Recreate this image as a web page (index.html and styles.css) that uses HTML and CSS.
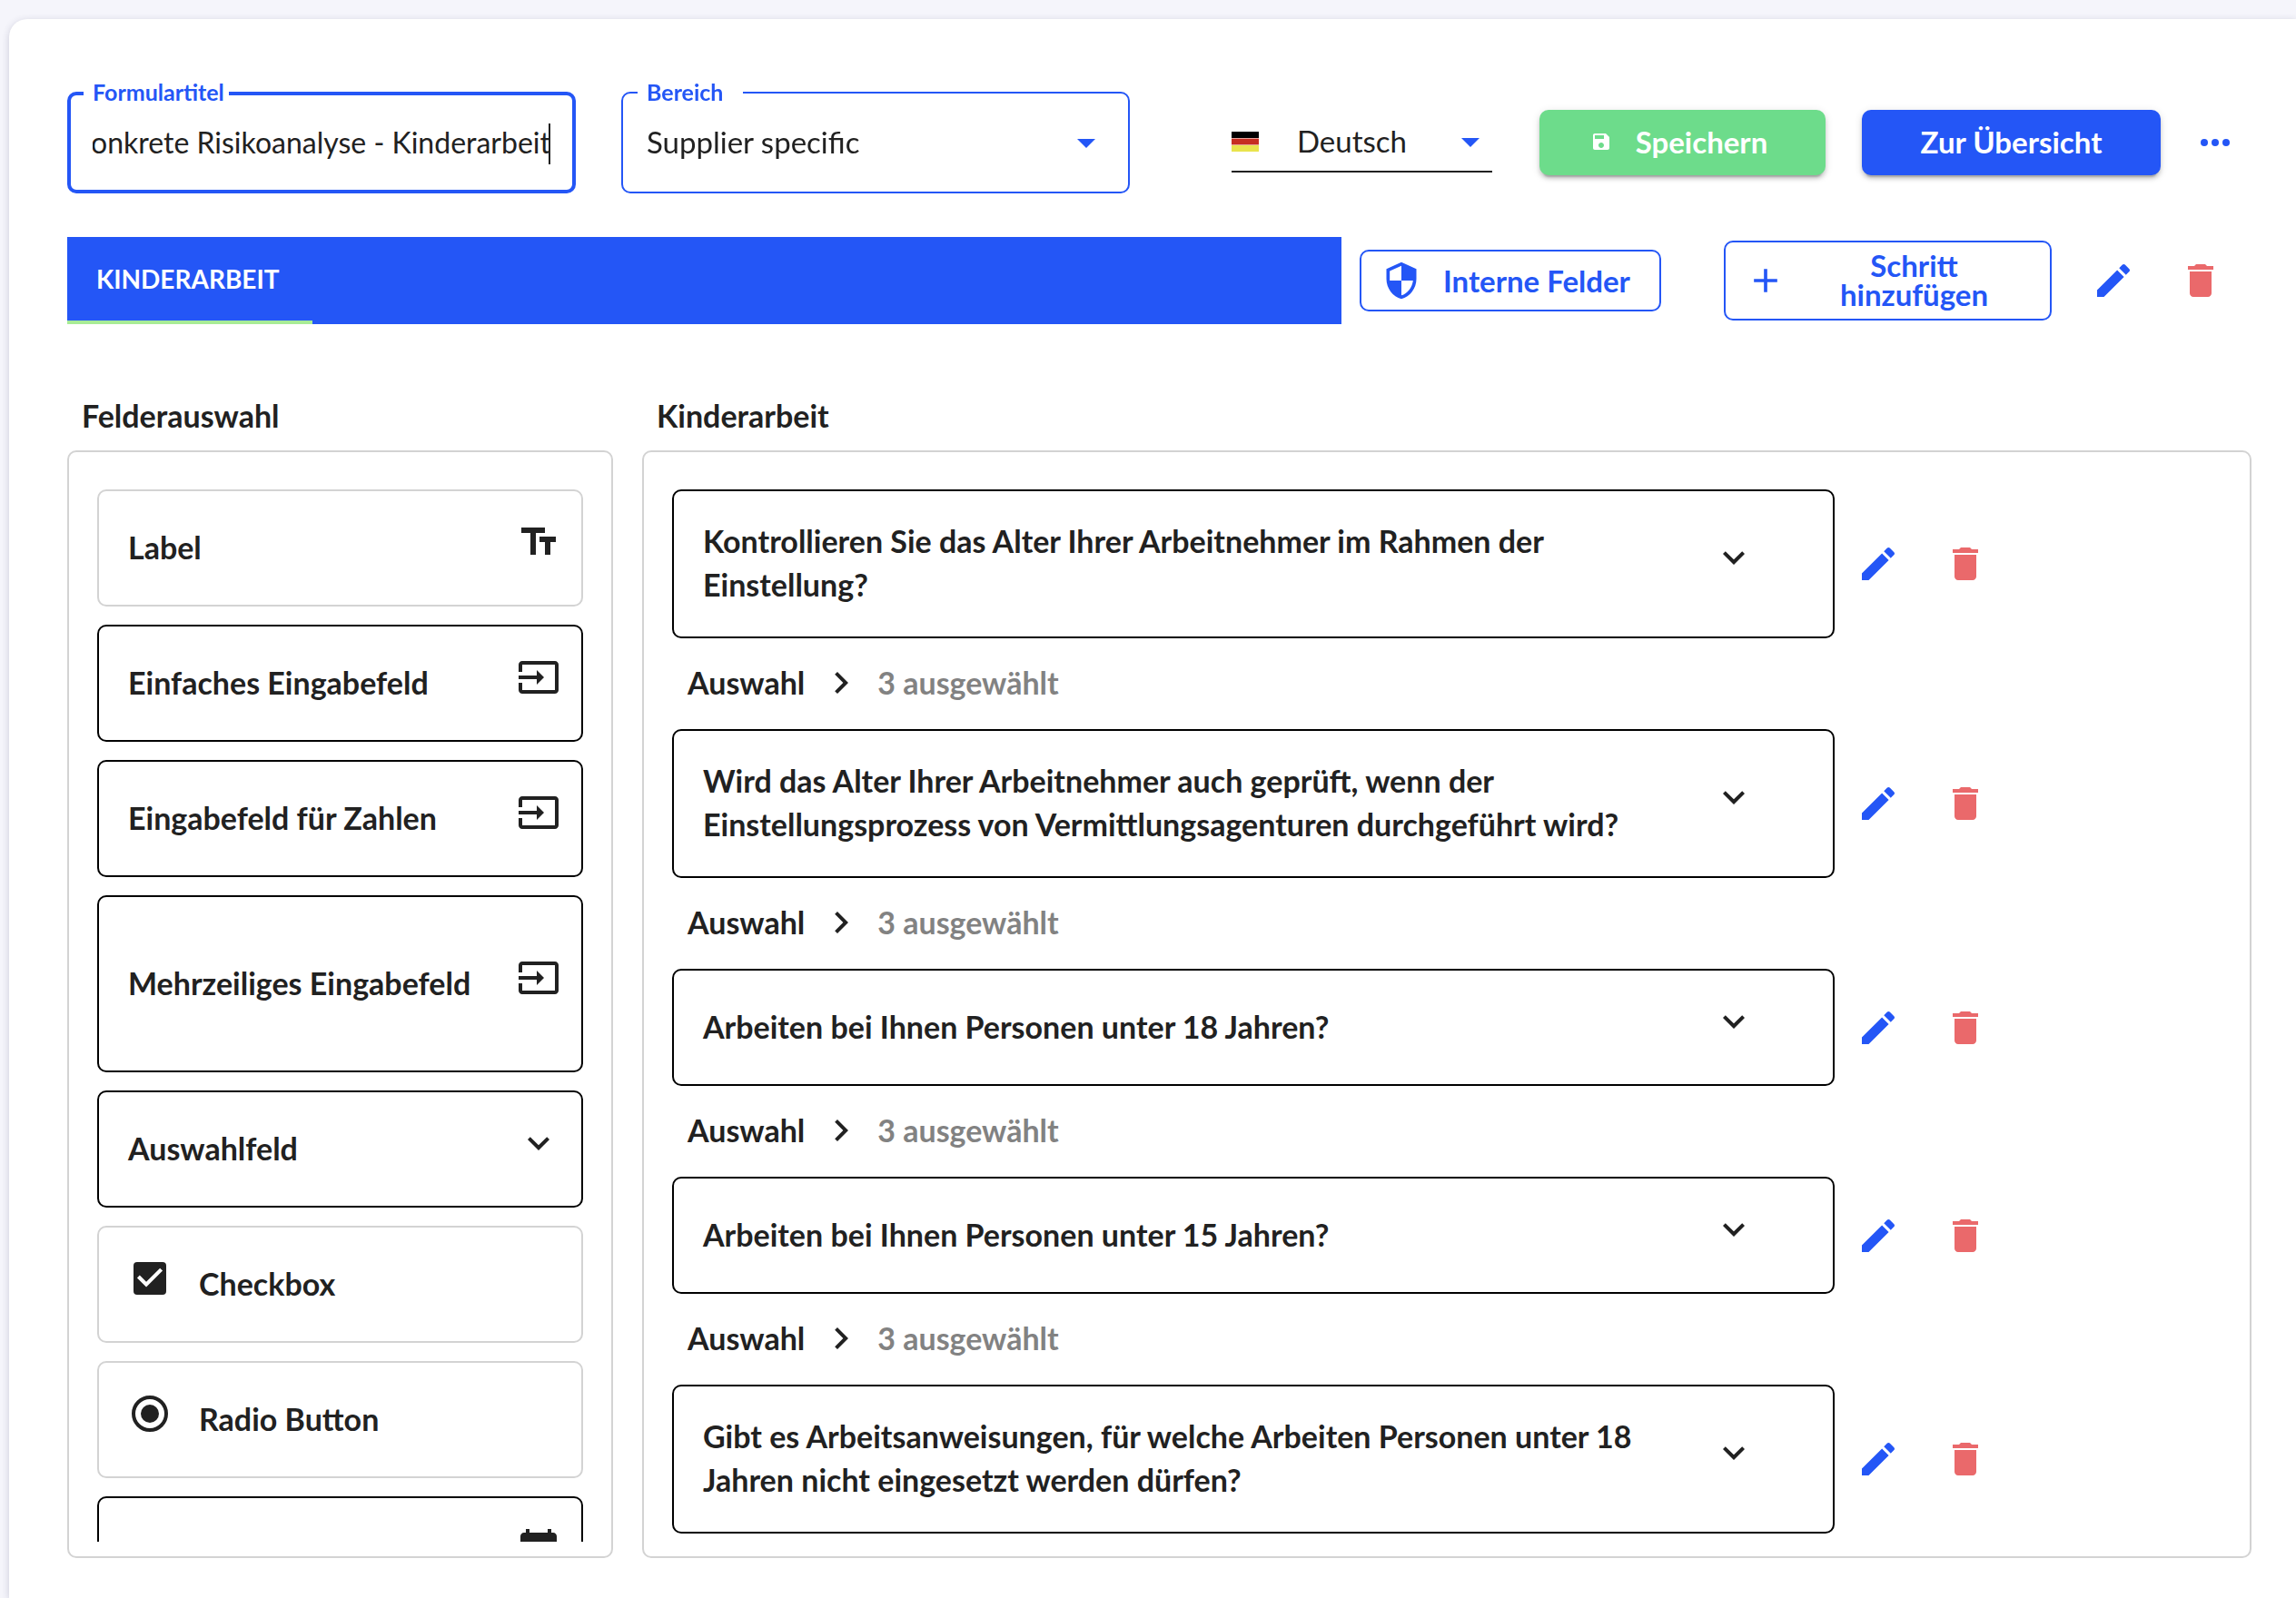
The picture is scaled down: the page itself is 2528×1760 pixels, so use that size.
FILE: index.html
```html
<!DOCTYPE html>
<html lang="de">
<head>
<meta charset="utf-8">
<meta name="viewport" content="width=device-width, initial-scale=1">
<title>Konkrete Risikoanalyse - Kinderarbeit</title>
<link rel="stylesheet" href="styles.css">
</head>
<body>
<svg class="sprite" aria-hidden="true">
  <symbol id="edit" viewBox="0 0 24 24"><path d="M3 17.25V21h3.75L17.81 9.94l-3.75-3.75L3 17.25zM20.71 7.04c.39-.39.39-1.02 0-1.41l-2.34-2.34c-.39-.39-1.02-.39-1.41 0l-1.83 1.83 3.75 3.75 1.83-1.83z"/></symbol>
  <symbol id="trash" viewBox="0 0 24 24"><path d="M6 19c0 1.1.9 2 2 2h8c1.1 0 2-.9 2-2V7H6v12zM19 4h-3.5l-1-1h-5l-1 1H5v2h14V4z"/></symbol>
  <symbol id="input" viewBox="0 0 24 24"><path d="M21 3.01H3c-1.1 0-2 .9-2 2V9h2V4.99h18v14.03H3V15H1v4.01c0 1.1.9 1.98 2 1.98h18c1.1 0 2-.88 2-1.98v-14c0-1.11-.9-2-2-2zM11 16l4-4-4-4v3H1v2h10v3z"/></symbol>
  <symbol id="text" viewBox="0 0 24 24"><path d="M2.5 4v3h5v12h3V7h5V4h-13zm19 5h-9v3h3v7h3v-7h3V9z"/></symbol>
  <symbol id="down" viewBox="0 0 24 24"><path d="M16.59 8.59L12 13.17 7.41 8.59 6 10l6 6 6-6z"/></symbol>
  <symbol id="right" viewBox="0 0 24 24"><path d="M10 6L8.59 7.41 13.17 12l-4.58 4.59L10 18l6-6z"/></symbol>
  <symbol id="calendar" viewBox="0 0 24 24"><path d="M20 3h-1V1h-2v2H7V1H5v2H4c-1.1 0-2 .9-2 2v16c0 1.1.9 2 2 2h16c1.1 0 2-.9 2-2V5c0-1.1-.9-2-2-2zm0 18H4V8h16v13z"/></symbol>
  <symbol id="save" viewBox="0 0 24 24"><path d="M17 3H5c-1.11 0-2 .9-2 2v14c0 1.1.89 2 2 2h14c1.1 0 2-.9 2-2V7l-4-4zm-5 16c-1.66 0-3-1.34-3-3s1.34-3 3-3 3 1.34 3 3-1.34 3-3 3zm3-10H5V5h10v4z"/></symbol>
  <symbol id="shield" viewBox="0 0 24 24"><path d="M12 1L3 5v6c0 5.55 3.84 10.74 9 12 5.16-1.26 9-6.45 9-12V5l-9-4zm0 10.99h7c-.53 4.12-3.28 7.79-7 8.94V12H5V6.3l7-3.11v8.8z"/></symbol>
  <symbol id="plus" viewBox="0 0 24 24"><path d="M19 13h-6v6h-2v-6H5v-2h6V5h2v6h6v2z"/></symbol>
  <symbol id="more" viewBox="0 0 24 24"><circle cx="6" cy="12" r="2"/><circle cx="12" cy="12" r="2"/><circle cx="18" cy="12" r="2"/></symbol>
  <symbol id="caret" viewBox="0 0 20 10"><path d="M0 0h20L10 10z"/></symbol>
  <symbol id="flag" viewBox="0 0 30 22"><path fill="#000" d="M0 0h30v7H0z"/><path fill="#e8a49c" d="M0 7h30v8H0z"/><path fill="#c62e22" d="M0 8h30v6H0z"/><path fill="#e9e44d" d="M0 15h30v7H0z"/></symbol>
</svg>

<main class="card">
  <header class="toolbar">
    <div class="field field-focused">
      <label class="field-label" for="form-title">Formulartitel</label>
      <input class="field-control" id="form-title" type="text" value="Konkrete Risikoanalyse - Kinderarbeit">
      <span class="text-cursor"></span>
    </div>
    <div class="field">
      <label class="field-label field-label-wide" for="area">Bereich</label>
      <select class="field-control" id="area"><option>Supplier specific</option></select>
      <svg class="caret"><use href="#caret"/></svg>
    </div>
    <div class="language">
      <svg class="flag"><use href="#flag"/></svg>
      <select class="language-select" aria-label="Sprache"><option>Deutsch</option></select>
      <svg class="caret"><use href="#caret"/></svg>
    </div>
    <button class="btn btn-save" type="button"><svg class="icon-small"><use href="#save"/></svg>Speichern</button>
    <button class="btn btn-overview" type="button">Zur Übersicht</button>
    <button class="icon-btn" type="button" aria-label="Mehr"><svg class="icon"><use href="#more"/></svg></button>
  </header>

  <div class="steps">
    <div class="tabs" role="tablist"><button class="tab" type="button" role="tab" aria-selected="true">KINDERARBEIT</button></div>
    <button class="btn-outline btn-internal" type="button"><svg class="icon-medium"><use href="#shield"/></svg><span>Interne Felder</span></button>
    <button class="btn-outline btn-step" type="button"><svg class="icon-medium"><use href="#plus"/></svg><span class="btn-text">Schritt hinzufügen</span></button>
    <div class="actions">
      <button class="icon-btn" type="button" aria-label="Schritt bearbeiten"><svg class="icon"><use href="#edit"/></svg></button>
      <button class="icon-btn danger" type="button" aria-label="Schritt löschen"><svg class="icon"><use href="#trash"/></svg></button>
    </div>
  </div>

  <div class="columns">
    <section class="column palette">
      <h2 class="column-title">Felderauswahl</h2>
      <div class="panel">
        <ul class="list palette-list">
          <li class="tile tile-light"><span>Label</span><svg class="icon"><use href="#text"/></svg></li>
          <li class="tile"><span>Einfaches Eingabefeld</span><svg class="icon"><use href="#input"/></svg></li>
          <li class="tile"><span>Eingabefeld für Zahlen</span><svg class="icon"><use href="#input"/></svg></li>
          <li class="tile tile-tall"><span>Mehrzeiliges Eingabefeld</span><svg class="icon"><use href="#input"/></svg></li>
          <li class="tile"><span>Auswahlfeld</span><svg class="icon"><use href="#down"/></svg></li>
          <li class="tile tile-light"><label class="choice"><input class="check" type="checkbox" checked>Checkbox</label></li>
          <li class="tile tile-light"><label class="choice"><input class="radio" type="radio" checked>Radio Button</label></li>
          <li class="tile"><span></span><svg class="icon"><use href="#calendar"/></svg></li>
        </ul>
      </div>
    </section>

    <section class="column content">
      <h2 class="column-title">Kinderarbeit</h2>
      <div class="panel">
        <div class="list">
          <div class="entry">
            <div class="question"><p class="question-text">Kontrollieren Sie das Alter Ihrer Arbeitnehmer im Rahmen der Einstellung?</p><svg class="icon"><use href="#down"/></svg></div>
            <div class="actions">
              <button class="icon-btn" type="button" aria-label="Bearbeiten"><svg class="icon"><use href="#edit"/></svg></button>
              <button class="icon-btn danger" type="button" aria-label="Löschen"><svg class="icon"><use href="#trash"/></svg></button>
            </div>
          </div>
          <div class="selection"><span>Auswahl</span><svg class="icon"><use href="#right"/></svg><span class="count">3 ausgewählt</span></div>
          <div class="entry">
            <div class="question"><p class="question-text">Wird das Alter Ihrer Arbeitnehmer auch geprüft, wenn der Einstellungsprozess von Vermittlungsagenturen durchgeführt wird?</p><svg class="icon"><use href="#down"/></svg></div>
            <div class="actions">
              <button class="icon-btn" type="button" aria-label="Bearbeiten"><svg class="icon"><use href="#edit"/></svg></button>
              <button class="icon-btn danger" type="button" aria-label="Löschen"><svg class="icon"><use href="#trash"/></svg></button>
            </div>
          </div>
          <div class="selection"><span>Auswahl</span><svg class="icon"><use href="#right"/></svg><span class="count">3 ausgewählt</span></div>
          <div class="entry">
            <div class="question"><p class="question-text">Arbeiten bei Ihnen Personen unter 18 Jahren?</p><svg class="icon"><use href="#down"/></svg></div>
            <div class="actions">
              <button class="icon-btn" type="button" aria-label="Bearbeiten"><svg class="icon"><use href="#edit"/></svg></button>
              <button class="icon-btn danger" type="button" aria-label="Löschen"><svg class="icon"><use href="#trash"/></svg></button>
            </div>
          </div>
          <div class="selection"><span>Auswahl</span><svg class="icon"><use href="#right"/></svg><span class="count">3 ausgewählt</span></div>
          <div class="entry">
            <div class="question"><p class="question-text">Arbeiten bei Ihnen Personen unter 15 Jahren?</p><svg class="icon"><use href="#down"/></svg></div>
            <div class="actions">
              <button class="icon-btn" type="button" aria-label="Bearbeiten"><svg class="icon"><use href="#edit"/></svg></button>
              <button class="icon-btn danger" type="button" aria-label="Löschen"><svg class="icon"><use href="#trash"/></svg></button>
            </div>
          </div>
          <div class="selection"><span>Auswahl</span><svg class="icon"><use href="#right"/></svg><span class="count">3 ausgewählt</span></div>
          <div class="entry">
            <div class="question"><p class="question-text">Gibt es Arbeitsanweisungen, für welche Arbeiten Personen unter 18 Jahren nicht eingesetzt werden dürfen?</p><svg class="icon"><use href="#down"/></svg></div>
            <div class="actions">
              <button class="icon-btn" type="button" aria-label="Bearbeiten"><svg class="icon"><use href="#edit"/></svg></button>
              <button class="icon-btn danger" type="button" aria-label="Löschen"><svg class="icon"><use href="#trash"/></svg></button>
            </div>
          </div>
        </div>
      </div>
    </section>
  </div>
</main>
<script src="script.js"></script>
</body>
</html>
```
FILE: script.js
```js
// Keep the end of a long form title in view while it is being edited.
const title = document.getElementById("form-title");
title.focus();
title.setSelectionRange(title.value.length, title.value.length);
title.scrollLeft = title.scrollWidth;
```
FILE: styles.css
```css
:root {
  --blue: #2456f6;
  --green: #6ddc8b;
  --red: #ea696b;
  --ink: #212121;
  --line: #d3d3d3;
}

* {
  box-sizing: border-box;
}

body {
  margin: 0;
  height: 100vh;
  padding: 21px 0 0 10px;
  overflow: hidden;
  background: #f5f5fb;
  color: var(--ink);
  font: 700 34px/48px Lato, sans-serif;
}

button,
input,
select {
  margin: 0;
  font: inherit;
  font-size: 33px;
  color: inherit;
}

button {
  padding: 0;
  border: 0;
  background: none;
}

svg {
  display: block;
  flex: none;
  fill: currentColor;
}

.sprite {
  position: absolute;
  width: 0;
  height: 0;
}

.icon {
  width: 48px;
  height: 48px;
}

.icon-medium {
  width: 44px;
  height: 44px;
}

.icon-small {
  width: 24px;
  height: 24px;
}

.card {
  display: flex;
  flex-direction: column;
  height: 100%;
  padding: 80px 49px 44px 64px;
  border-radius: 20px 0 0 0;
  background: #fff;
  box-shadow: 0 2px 8px rgba(40, 40, 80, 0.2);
}

/* Top row */

.toolbar {
  display: flex;
  align-items: center;
  padding-right: 16px;
}

.field {
  position: relative;
  flex: 0 1 560px;
  height: 112px;
  margin-right: 50px;
  border: 2px solid var(--blue);
  border-radius: 10px;
}

.field-focused {
  border-width: 4px;
}

.field-label {
  position: absolute;
  top: -16px;
  left: 16px;
  padding: 0 5px 0 10px;
  background: #fff;
  color: var(--blue);
  font-size: 25px;
  line-height: 28px;
}

.field-focused .field-label {
  top: -18px;
  left: 14px;
}

.field-label-wide {
  padding-right: 22px;
}

.field-control {
  display: block;
  width: 100%;
  height: 100%;
  padding: 0 26px 2px;
  border: 0;
  outline: 0;
  background: none;
  appearance: none;
  font-weight: 400;
}

.field-focused .field-control {
  padding: 0 24px 2px;
  font-size: 32px;
  caret-color: transparent;
}

.text-cursor {
  position: absolute;
  top: 31px;
  right: 24px;
  width: 2px;
  height: 45px;
  background: var(--ink);
}

.caret {
  position: absolute;
  top: 50%;
  right: 36px;
  width: 20px;
  height: 10px;
  margin-top: -4px;
  color: var(--blue);
  pointer-events: none;
}

.language {
  position: relative;
  display: flex;
  align-items: center;
  flex: 0 1 287px;
  height: 66px;
  margin: 0 52px 0 auto;
  border-bottom: 2px solid var(--ink);
}

.language .caret {
  right: 14px;
}

.flag {
  width: 30px;
  height: 22px;
}

.language-select {
  flex: 1;
  padding: 0 0 2px 42px;
  border: 0;
  background: none;
  appearance: none;
  font-weight: 400;
}

.btn {
  display: flex;
  align-items: center;
  justify-content: center;
  height: 72px;
  padding-bottom: 2px;
  border-radius: 10px;
  color: #fff;
  box-shadow: 0 6px 2px -4px rgba(0, 0, 0, 0.2), 0 4px 4px rgba(0, 0, 0, 0.14), 0 2px 10px rgba(0, 0, 0, 0.12);
}

.btn-save {
  width: 315px;
  padding-right: 8px;
  gap: 26px;
  background: var(--green);
}

.btn-overview {
  width: 329px;
  margin: 0 36px 0 40px;
  background: var(--blue);
}

.icon-btn {
  color: var(--blue);
}

.danger {
  color: var(--red);
}

/* Step row */

.steps {
  display: flex;
  align-items: center;
  margin-top: 48px;
  padding-right: 32px;
}

.tabs {
  display: flex;
  flex: 1;
  height: 96px;
  background: var(--blue);
}

.tab {
  width: 270px;
  padding: 0 32px;
  border-bottom: 4px solid #a8ec96;
  color: #fff;
  font-size: 28px;
  text-align: left;
}

.btn-outline {
  display: flex;
  align-items: center;
  border: 2px solid var(--blue);
  border-radius: 10px;
  color: var(--blue);
  line-height: 32px;
}

.btn-internal {
  width: 332px;
  height: 68px;
  margin-left: 20px;
  padding-left: 22px;
  gap: 24px;
}

.btn-step {
  width: 361px;
  height: 88px;
  margin: 0 44px 0 69px;
  padding: 0 22px;
}

.btn-text {
  flex: 1;
  padding: 0 32px 2px 46px;
}

.actions {
  display: flex;
  gap: 48px;
}

/* Builder */

.columns {
  display: flex;
  flex: 1;
  gap: 32px;
  min-height: 0;
  margin-top: 77px;
}

.column {
  display: flex;
  flex-direction: column;
  min-height: 0;
}

.palette {
  flex: 0 0 601px;
}

.content {
  flex: 1;
}

.column-title {
  margin: 0 0 14px;
  padding-left: 16px;
  font-size: 34px;
  line-height: 48px;
}

.panel {
  flex: 1;
  min-height: 0;
  padding: 41px 31px 16px;
  border: 2px solid var(--line);
  border-radius: 10px;
}

.list {
  height: 100%;
  margin: 0;
  padding: 0;
  overflow-y: auto;
  scrollbar-width: none;
  list-style: none;
}

.palette-list {
  display: flex;
  flex-direction: column;
  gap: 20px;
}

.tile {
  display: flex;
  flex: none;
  align-items: center;
  justify-content: space-between;
  height: 129px;
  padding: 0 23px 2px 32px;
  border: 2px solid #000;
  border-radius: 10px;
}

.tile-light {
  border-color: var(--line);
}

.tile-tall {
  height: 195px;
}

.tile .icon,
.question .icon {
  margin-bottom: 12px;
}

.choice {
  display: flex;
  align-items: center;
}

.check,
.radio {
  flex: none;
  appearance: none;
  width: 36px;
  height: 36px;
  margin: 0 36px 12px 6px;
  border-radius: 4px;
  background: var(--ink);
}

.check::after {
  content: "";
  display: block;
  height: 100%;
  background: #fff;
  clip-path: polygon(39% 78%, 11% 50%, 19% 42%, 39% 62%, 81% 20%, 89% 28%);
}

.radio {
  width: 40px;
  height: 40px;
  margin: 0 34px 12px 4px;
  padding: 6px;
  border: 4px solid var(--ink);
  border-radius: 50%;
  background-clip: content-box;
}

.entry {
  display: flex;
  align-items: center;
  gap: 24px;
}

.question {
  display: flex;
  align-items: center;
  justify-content: space-between;
  width: 75%;
  min-height: 129px;
  padding: 31px 85px 33px 32px;
  border: 2px solid #000;
  border-radius: 10px;
}

.question-text {
  max-width: 1040px;
  margin: 0;
}

.selection {
  display: flex;
  align-items: center;
  gap: 16px;
  height: 100px;
  padding: 0 0 2px 17px;
}

.count {
  color: #828282;
}
```
